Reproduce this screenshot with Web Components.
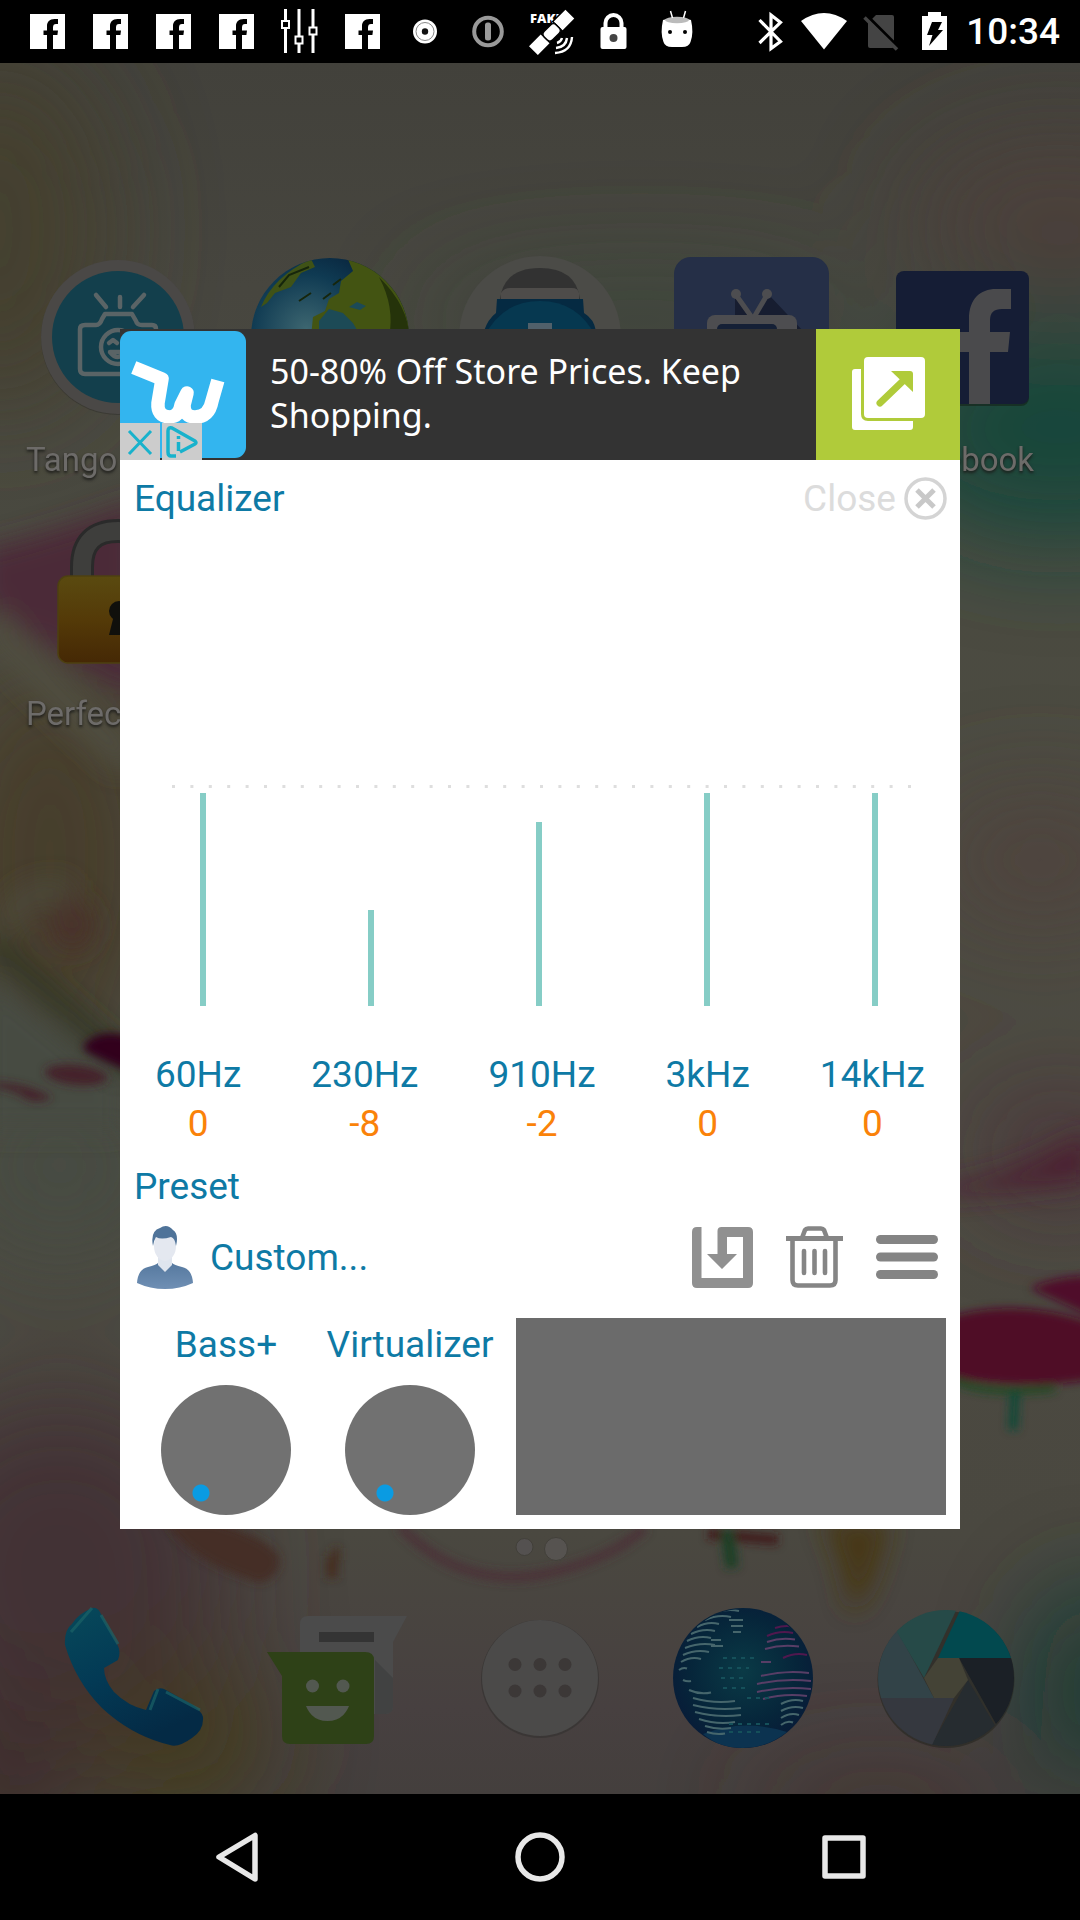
<!DOCTYPE html>
<html lang="en">
<head>
<meta charset="utf-8">
<meta name="viewport" content="width=device-width, initial-scale=1">
<title>Equalizer</title>
<style>
html, body { margin: 0; background: #000; }
body { min-height: 100vh; font-family: Roboto, "Noto Sans", sans-serif; }
phone-screen { min-height: 100vh; }
</style>
</head>
<body>
<phone-screen>
  <status-bar slot="status"></status-bar>
  <wall-paper></wall-paper>
  <home-launcher></home-launcher>
  <eq-dialog></eq-dialog>
  <nav-bar slot="nav"></nav-bar>
</phone-screen>

<script>
const define = (name, html, setup) => {
  const tpl = document.createElement('template');
  tpl.innerHTML = html;
  customElements.define(name, class extends HTMLElement {
    constructor() {
      super();
      this.attachShadow({ mode: 'open' }).appendChild(tpl.content.cloneNode(true));
    }
    connectedCallback() { if (setup) setup(this, this.shadowRoot); }
  });
};

/* ---------- Frame ---------- */
define('phone-screen', `
<style>
:host { display: flex; flex-direction: column; }
main { flex: 1; position: relative; display: grid; grid-template: 1fr / 1fr; overflow: hidden; }
::slotted(:not([slot])) { grid-area: 1 / 1; }
</style>
<slot name="status"></slot>
<main><slot></slot></main>
<slot name="nav"></slot>`);

/* ---------- Status bar ---------- */
const fb = `<svg viewBox="0 0 63 63"><g transform="translate(14 14)"><path fill="#fff" fill-rule="evenodd" d="M0 0H35V35H23V21H27.4L28 16.5H23V13.500C23 11 24 10 26 10H28V5H24.500C19.500 5 17 8 17 12V16.500H13.500V21H17V35H0Z"/></g></svg>`;
define('status-bar', `
<style>
:host { display: flex; justify-content: space-between; align-items: center; height: 63px; padding: 0 20px 0 16px; background: #000; color: #fff; }
div { display: flex; align-items: center; }
svg { display: block; width: 63px; height: 63px; }
.sys svg { width: 54px; }
time { font-size: 37px; line-height: 65px; font-weight: 500; padding-left: 6px; }
</style>
<div>
${fb}${fb}${fb}${fb}
<svg viewBox="0 0 63 63" stroke="#fff" fill="#000"><path stroke-width="3" d="M17.500 9V53M31 9V53M45 9V53"/><path stroke-width="2" d="M14 21h7v7h-7zM27.500 36.500h7v7h-7zM41.500 27.500h7v7h-7z"/></svg>
${fb}
<svg viewBox="0 0 63 63"><circle cx="31" cy="31.500" r="12" fill="#fff"/><circle cx="31" cy="31.500" r="9" fill="none" stroke="#888"/><circle cx="31" cy="31.500" r="3.200" fill="#111"/></svg>
<svg viewBox="0 0 63 63"><circle cx="31" cy="31.500" r="13.800" fill="none" stroke="#999" stroke-width="4"/><rect x="28" y="22.500" width="6" height="18" rx="2.500" fill="#999"/></svg>
<svg viewBox="0 0 63 63"><text x="10" y="23" font-size="13" font-weight="900" fill="#fff" font-family="Open Sans, sans-serif">FAKE</text>
<g transform="rotate(-45 32 32)" fill="#fff" stroke="#000" stroke-width="1.500"><rect x="40" y="25" width="18" height="14"/><rect x="5" y="25" width="18" height="14"/><rect x="23" y="26" width="17" height="12" rx="4"/></g><path fill="none" stroke="#fff" stroke-width="2.400" d="M37 43q4-1 5-5M36 48q10-1 11-10M35 53q16-1 17-16"/></svg>
<svg viewBox="0 0 63 63"><rect x="17.500" y="27" width="26" height="22" rx="2" fill="#fff"/><path d="M22.500 28V23a8 8 0 0 1 16 0V28" fill="none" stroke="#fff" stroke-width="4"/><circle cx="30.500" cy="38" r="4" fill="#444"/></svg>
<svg viewBox="0 0 63 63"><path d="M17 20Q31 15 45 20Q48 33 44.500 42Q43 47 36 47H26Q19 47 17.500 42Q14 33 17 20Z" fill="#fff"/><ellipse cx="31" cy="20" rx="12" ry="3.300" fill="#bbb"/><path d="M24.500 11l2 7M39.500 11l-2 7" stroke="#fff" stroke-width="1.500"/><circle cx="24" cy="32" r="2" fill="#000"/><circle cx="39" cy="32" r="2" fill="#000"/></svg>
</div>
<div class="sys">
<svg viewBox="0 0 54 63"><path d="M15.500 20L36.500 41.500L27 48.500V15L36.500 22.500L15.500 43" fill="none" stroke="#fff" stroke-width="3.200"/></svg>
<svg viewBox="0 0 54 63"><path d="M3 21Q26 5 49 21L26 49.500Z" fill="#fff"/></svg>
<svg viewBox="0 0 54 63"><path d="M24 15H40a2 2 0 0 1 2 2V46a2 2 0 0 1-2 2H18a2 2 0 0 1-2-2V23Z" fill="#444"/><path d="M14 15L47 48" stroke="#000" stroke-width="3.500"/><path d="M12.500 17.500L45 49.500" stroke="#444" stroke-width="3.500"/></svg>
<svg viewBox="0 0 54 63"><path d="M22 12h13v4h6v34H16V16h6z" fill="#fff"/><path d="M26 22h10l-4 8h5L23 46l3.500-11H21z" fill="#000"/></svg>
<time>10:34</time>
</div>`);

/* ---------- Wallpaper ---------- */
define('wall-paper', `
<style>
:host { position: absolute; inset: 0; background: #4a463e; }
svg { display: block; width: 100%; height: 100%; }
</style>
<svg viewBox="0 63 1080 1731" preserveAspectRatio="none" aria-hidden="true">
<defs>
<linearGradient id="b" x1="0" y1="0" x2="0" y2="1"><stop offset="0" stop-color="#42413b"/><stop offset=".13" stop-color="#47463f"/><stop offset=".3" stop-color="#4b4b41"/><stop offset=".6" stop-color="#4c4a41"/><stop offset=".85" stop-color="#4a4840"/><stop offset=".95" stop-color="#474040"/><stop offset="1" stop-color="#443f3d"/></linearGradient>
<filter id="f4" filterUnits="userSpaceOnUse" x="-200" y="-100" width="1500" height="2200"><feGaussianBlur stdDeviation="4"/></filter>
<filter id="f12" filterUnits="userSpaceOnUse" x="-200" y="-100" width="1500" height="2200"><feGaussianBlur stdDeviation="13"/></filter>
<filter id="f40" filterUnits="userSpaceOnUse" x="-300" y="-200" width="1700" height="2400"><feGaussianBlur stdDeviation="55"/></filter>
</defs>
<rect y="63" width="1080" height="1731" fill="url(#b)"/>
<g filter="url(#f40)">
<ellipse cx="0" cy="230" rx="110" ry="180" fill="#443f2e"/>
<ellipse cx="1060" cy="220" rx="150" ry="80" fill="#4b413a"/>
<ellipse cx="1060" cy="430" rx="180" ry="110" fill="#13463a"/>
<ellipse cx="640" cy="320" rx="220" ry="40" fill="#3b463a"/>
<ellipse cx="50" cy="860" rx="110" ry="200" fill="#473c2b"/>
<ellipse cx="1040" cy="860" rx="110" ry="60" fill="#50423d"/>
<ellipse cx="60" cy="1170" rx="120" ry="100" fill="#474b43"/>
<ellipse cx="60" cy="1570" rx="170" ry="180" fill="#433334"/>
<ellipse cx="180" cy="1740" rx="90" ry="70" fill="#433b18"/>
<ellipse cx="1100" cy="1690" rx="60" ry="100" fill="#0f3e30"/>
<ellipse cx="880" cy="1810" rx="130" ry="30" fill="#45312f"/>
<ellipse cx="0" cy="1790" rx="60" ry="120" fill="#3c2b2a"/>
<ellipse cx="1060" cy="1150" rx="80" ry="50" fill="#4b303a"/>
</g>
<g filter="url(#f12)">
<path d="M-20 550Q60 530 140 500V700Q60 660 -20 600Z" fill="#4b2a38"/>
<path d="M-10 620Q50 690 130 760" stroke="#504d3f" stroke-width="34" fill="none"/>
<path d="M10 930Q10 885 70 890" stroke="#4d4c3d" stroke-width="16" fill="none"/>
<ellipse cx="72" cy="925" rx="22" ry="26" fill="#4a302c"/>
<path d="M-10 940L140 1075" stroke="#2d3623" stroke-width="18"/>
<path d="M-20 965L125 1085V1130H-20Z" fill="#464b42"/>
<path d="M820 1520H890Q870 1610 850 1610Q840 1550 820 1520Z" fill="#473717"/>
<path d="M940 1185Q1010 1180 1090 1130V1180Q1020 1190 940 1196Z" fill="#4c2130"/>
</g>
<g filter="url(#f4)">
<path d="M165 1522H215Q290 1545 278 1568Q268 1590 245 1578Q190 1560 165 1522Z" fill="#452e27"/>
<path d="M84 1045Q100 1025 140 1040V1075Q100 1060 84 1050Z" fill="#33051f"/>
<ellipse cx="76" cy="1075" rx="31" ry="10" transform="rotate(6 76 1075)" fill="#45242b"/>
<path d="M-5 1082Q30 1084 52 1098Q30 1106 20 1094Q5 1088 -5 1088Z" fill="#452329"/>
<path d="M940 1320Q1010 1295 1090 1322V1380Q1010 1392 940 1374Z" fill="#4f0a28"/>
<path d="M1030 1288Q1060 1275 1090 1276V1316Q1060 1302 1030 1288Z" fill="#500d2a"/>
<path d="M955 1380Q985 1396 1055 1388" stroke="#1c4a22" stroke-width="7" fill="none"/>
<path d="M1015 1392L1013 1430" stroke="#174a37" stroke-width="10"/>
<path d="M400 1526Q460 1590 545 1574Q610 1560 645 1528" stroke="#4c3337" stroke-width="9" fill="none"/>
<path d="M332 1554H340M332 1556V1578" stroke="#452d22" stroke-width="12" fill="none"/>
<path d="M708 1534L778 1540" stroke="#401c1e" stroke-width="10"/>
<path d="M727 1530L732 1568" stroke="#1c4026" stroke-width="13"/>
</g>
</svg>`);

/* ---------- Launcher ---------- */
define('launcher-app', `
<style>
:host { display: flex; flex-direction: column; align-items: center; min-width: 0; height: 254px; color: #6d6b69; }
div { width: 160px; height: 160px; }
span { display: block; height: 86px; line-height: 86px; font-size: 33px; white-space: nowrap; text-shadow: 0 2px 3px #1c1c1a; }
:host([start]) span { align-self: flex-start; padding-left: 14px; }
::slotted(svg) { display: block; width: 160px; height: 160px; overflow: visible; }
</style>
<div><slot></slot></div><span></span>`, (host, root) => {
  root.querySelector('span').textContent = host.getAttribute('name') || '';
});

const apps = `
<launcher-app name="Tango" start><svg viewBox="0 0 160 160"><circle cx="80" cy="81" r="77" fill="#2e2e2a" opacity=".5"/><circle cx="80" cy="80" r="77" fill="#4a4846"/><circle cx="80" cy="80" r="66" fill="#133f4c"/><g fill="none" stroke="#5a6466" stroke-width="4.500" stroke-linecap="round" stroke-linejoin="round"><path d="M58 38L68 50M82 40V50M106 38L95 50M42 72Q42 68 47 68H58Q62 68 64 62L67 57H94L98 64Q99 68 104 68H114Q118 68 118 72V112Q118 117 113 117H47Q42 117 42 112Z"/><circle cx="80" cy="90" r="17"/><path d="M71 86l4-3 4 3M72 95q8 10 15 0z"/></g></svg></launcher-app>
<launcher-app><svg viewBox="0 0 160 160"><defs><radialGradient id="e" cx=".35" cy=".45" r=".7"><stop offset="0" stop-color="#3d6670"/><stop offset=".5" stop-color="#0f3a52"/><stop offset="1" stop-color="#04152e"/></radialGradient><clipPath id="ec"><circle cx="81" cy="80" r="79"/></clipPath></defs><circle cx="81" cy="80" r="79" fill="url(#e)"/><g clip-path="url(#ec)"><path d="M98 0L104 14 92 24 90 36 80 42 76 54 64 60 62 80H160V0Z" fill="#435412"/><path d="M12 50Q24 20 62 2L66 10 52 16 42 30 26 36 18 46Z" fill="#3f5216"/><path d="M70 64l10-12 14 4 10 10 8 14H70zM100 50l8-5 9 4-6 4z" fill="#1c4a56"/><path d="M30 30l10-12 20-8M84 28l8-6M74 42l8-6M50 44l12-8" stroke="#16260c" stroke-width="2" fill="none"/><path d="M130 20Q160 50 160 80H140Q146 50 130 20Z" fill="#25330a"/></g></svg></launcher-app>
<launcher-app><svg viewBox="0 0 160 160"><circle cx="80" cy="80" r="81" fill="#4b4b47"/><path d="M40 42Q44 11 80 11T120 42Z" fill="#323232"/><path d="M41 36Q44 31 50 31H112Q118 31 119 36V42H41Z" fill="#4e4c4a"/><path d="M37 42H123L124 56Q134 62 136 74H24Q28 62 36 56Z" fill="#052a42"/><path d="M24 80Q42 44 80 44T136 80Z" fill="#063850"/><rect x="68" y="66" width="24" height="6" fill="#50606a"/></svg></launcher-app>
<launcher-app><svg viewBox="0 0 160 160"><rect x="3" y="0" width="155" height="155" rx="17" fill="#252f47"/><path d="M64 38L84 60 98 38 132 74H64Z" fill="#171d30"/><path d="M65 38L82 62 96 38" fill="none" stroke="#4d4d50" stroke-width="5"/><circle cx="65" cy="37" r="5" fill="#4d4d50"/><circle cx="96" cy="37" r="5" fill="#4d4d50"/><rect x="36" y="58" width="90" height="70" rx="8" fill="#4d4d50"/><rect x="46" y="67" width="60" height="50" rx="5" fill="#152036"/></svg></launcher-app>
<launcher-app name="Facebook"><svg viewBox="0 0 160 160"><rect x="14" y="16" width="133" height="133" rx="8" fill="#111a10" opacity=".5"/><rect x="14" y="14" width="133" height="133" rx="8" fill="#151d35"/><path d="M87 147V95H72V75H87V62C87 42 98 32 114 32H129V52H120Q108 52 108 63V75H128L126 95H108V147Z" fill="#4a4a4c"/></svg></launcher-app>
<launcher-app name="Perfect" start><svg viewBox="0 0 160 160"><defs><linearGradient id="p" x1="0" y1="0" x2="0" y2="1"><stop offset="0" stop-color="#5a4a10"/><stop offset=".5" stop-color="#543a08"/><stop offset="1" stop-color="#452805"/></linearGradient></defs><path d="M44 70V56Q44 20 80 20T116 56V70" fill="none" stroke="#2a2a2a" stroke-width="24"/><path d="M44 70V56Q44 20 80 20T116 56V70" fill="none" stroke="#3e3e3c" stroke-width="18"/><rect x="20" y="65" width="120" height="87" rx="10" fill="url(#p)" stroke="#4d4010" stroke-width="1.500"/><circle cx="81" cy="100" r="10" fill="#10100c"/><path d="M76 104h10l5 20H71z" fill="#10100c"/></svg></launcher-app>`;

const lines = (rows, c) => rows.map(([x, y, w, d]) => `<path d="M${x} ${y}q${w / 2} ${d} ${w} ${d / 2}" stroke="${c}"/>`).join('');
define('home-launcher', `
<style>
:host { display: flex; flex-direction: column; justify-content: space-between; z-index: 1; }
.apps { display: grid; grid-template-columns: repeat(5, 1fr); padding: 194px 12px 0; }
footer { display: flex; flex-direction: column; align-items: center; gap: 37px; padding: 0 32px 36px; }
.dots { width: 60px; height: 26px; }
.dock { display: grid; grid-template-columns: repeat(5, 1fr); justify-items: center; align-self: stretch; }
.dock svg { display: block; width: 160px; height: 160px; overflow: visible; }
</style>
<div class="apps">${apps}</div>
<footer>
<svg class="dots" viewBox="0 0 60 26"><circle cx="14.500" cy="12" r="8.500" fill="#545150" stroke="#42403a"/><circle cx="46" cy="14" r="11.500" fill="#565350" stroke="#42403a"/></svg>
<div class="dock">
<svg viewBox="0 0 160 160"><defs><linearGradient id="t" x1="0" y1="0" x2=".5" y2="1"><stop offset="0" stop-color="#07495a"/><stop offset=".5" stop-color="#033a55"/><stop offset="1" stop-color="#042a45"/></linearGradient></defs><path d="M38 10Q24 16 18 26Q10 32 11 47Q22 84 48 110Q78 138 116 147Q124 150 138 140Q150 132 149 119Q147 112 137 106L112 92Q106 88 100 93L92 112Q74 108 60 94Q50 82 50 70L64 62Q67 54 64 48L48 18Q44 8 38 10Z" fill="url(#t)"/><path d="M38 10L17 34M47 17L64 46M104 91L96 112M112 94L146 112" stroke="#1b6367" stroke-width="3" opacity=".7" fill="none"/></svg>
<svg viewBox="0 0 160 160"><path d="M43 26Q43 18 51 18H150L136 44V108Q136 116 128 116H43Z" fill="#4b4b4b"/><path d="M118 62L136 80V108Q136 116 128 116H118Z" fill="#414242"/><rect x="62" y="34" width="55" height="10" fill="#343434"/><path d="M10 54H108Q117 54 117 62V138Q117 146 109 146H33Q25 146 25 138V78Z" fill="#2e4117"/><circle cx="55.500" cy="88" r="6.500" fill="#525850"/><circle cx="86" cy="88" r="6.500" fill="#525850"/><path d="M49 108H92Q86 123 70.500 123T49 108Z" fill="#525850"/></svg>
<svg viewBox="0 0 160 160"><circle cx="80" cy="81" r="59" fill="#32302e" opacity=".6"/><circle cx="80" cy="80" r="58" fill="#4b4a49"/><g fill="#3c3837"><circle cx="55" cy="66.500" r="6.500"/><circle cx="80" cy="66.500" r="6.500"/><circle cx="105" cy="66.500" r="6.500"/><circle cx="55" cy="93" r="6.500"/><circle cx="80" cy="93" r="6.500"/><circle cx="105" cy="93" r="6.500"/></g></svg>
<svg viewBox="0 0 160 160"><defs><radialGradient id="g" cx=".5" cy=".45" r=".55"><stop offset="0" stop-color="#0a3a46"/><stop offset=".7" stop-color="#06253a"/><stop offset="1" stop-color="#081c38"/></radialGradient><clipPath id="gc"><circle cx="80" cy="80" r="69"/></clipPath></defs><circle cx="80" cy="80" r="70" fill="url(#g)"/><path d="M40 136Q80 120 124 134Q104 150 80 150T40 136Z" fill="#0c3350"/><g fill="none" stroke-width="2" clip-path="url(#gc)">
${lines([[50,16,26,-6],[42,22,26,-6],[34,29,22,-6],[28,36,24,-6],[24,43,24,-6],[22,50,30,-6],[20,57,26,-6],[18,64,20,-6],[48,42,10,0],[48,48,12,0],[66,22,14,0],[68,28,12,0],[70,34,8,0],[16,72,8,-3],[20,82,8,2],[26,92,22,5],[30,100,42,6],[30,107,48,6],[32,114,46,6],[36,121,36,6],[42,128,26,4],[44,134,18,3],[118,106,22,-6],[118,113,22,-6],[118,120,18,-6],[118,127,12,-5]], '#46666c')}
${lines([[104,44,28,-5],[102,51,34,-5],[98,64,10,0],[98,78,48,-6],[94,86,54,-6],[94,94,54,-6],[100,101,44,-6]], '#583e66')}
${lines([[104,38,26,-6],[112,30,18,-3],[120,60,24,-6]], '#50184e')}
<path d="M60 60h34M56 70h30M58 80h26M60 90h24M84 100h22M66 126h40M66 134h34" stroke="#15505a" stroke-dasharray="4 5"/></g></svg>
<svg viewBox="0 0 160 160"><defs><clipPath id="cc"><circle cx="80" cy="80" r="68"/></clipPath></defs><circle cx="80" cy="81.500" r="68.500" fill="#2a2924" opacity=".7"/><g clip-path="url(#cc)"><path d="M10 100V0L32 34L68 100Z" fill="#324348"/><path d="M31 34V0H96L58 80Z" fill="#264a48"/><path d="M96 8H160V60H72Z" fill="#02494f"/><path d="M93 60H160V160L130 126Z" fill="#1b2026"/><path d="M102 82L134 136 120 160H50L66 146Z" fill="#262c30"/><path d="M0 100H88L60 160H0Z" fill="#35383f"/></g><path d="M72 60H93L102 82L88 100H68L58 80Z" fill="#444336"/></svg>
</div>
</footer>`);

/* ---------- Ad ---------- */
define('ad-banner', `
<style>
:host { display: flex; height: 131px; background: #333; color: #fff; position: relative; }
a { color: inherit; text-decoration: none; }
.copy { flex: 1; display: flex; gap: 24px; font-family: "Noto Sans", "Open Sans", sans-serif; font-size: 34px; line-height: 44px; }
.copy svg { flex: none; width: 126px; height: 127px; margin-top: 2px; }
.copy span { padding: 20px 40px 0 0; }
.go { width: 144px; background: #b0cb3a; display: grid; place-items: center; }
.tools { position: absolute; left: 0; bottom: 0; display: flex; gap: 2px; }
button { border: 0; padding: 0; background: #ccc; width: 40px; height: 37px; }
svg { display: block; }
</style>
<a class="copy" href="#store"><svg viewBox="0 0 126 127" aria-hidden="true"><rect width="126" height="127" rx="11" fill="#33b5ef"/><path d="M20 39L42 48L38 72Q37 85 49 86Q59 86 61 74L67 62L64 74Q64 86 75 86Q89 86 92 70L96 56" fill="none" stroke="#fff" stroke-width="13.500" stroke-linecap="square" stroke-linejoin="round"/></svg><span>50-80% Off Store Prices. Keep Shopping.</span></a>
<a class="go" href="#open" aria-label="Open"><svg width="76" height="74" viewBox="-2 0 76 74"><path d="M3 12H9V57Q9 64 16 64H61V70Q61 73 58 73H3Q0 73 0 70V15Q0 12 3 12Z" fill="#fff"/><rect x="12" y="0" width="61" height="61" rx="4" fill="#fff"/><path d="M28 46L52 23" stroke="#b0cb3a" stroke-width="7" stroke-linecap="round"/><path d="M39 14H58Q61 14 61 17V35Z" fill="#b0cb3a"/></svg></a>
<div class="tools">
<button aria-label="Close ad"><svg width="40" height="37" viewBox="0 0 40 37"><path d="M9 8L31 31M31 8L9 31" stroke="#18b2cc" stroke-width="3"/></svg></button>
<button aria-label="Ad choices"><svg width="40" height="37" viewBox="0 0 40 37" fill="none" stroke="#18b2cc" stroke-width="3.500" stroke-linejoin="round"><path d="M14 33H9Q6 33 6 29V8Q6 4 10 5L33 18Q35 20 33 21L18 29"/><path d="M16.500 19V28M16.500 13V16"/></svg></button>
</div>`);

/* ---------- Equalizer chart ---------- */
const bands = [['60Hz', 0], ['230Hz', -8], ['910Hz', -2], ['3kHz', 0], ['14kHz', 0]];
define('eq-chart', `
<style>
:host { display: block; font-size: 37px; line-height: 49px; }
.plot { display: grid; grid-template-columns: repeat(5, 1fr); padding: 42px 0 44px; position: relative; }
.zero { position: absolute; left: 52px; top: 247px; width: calc(100% - 101px); height: 3px; }
.cell { display: flex; justify-content: center; padding-right: 2px; }
input { appearance: none; -webkit-appearance: none; writing-mode: vertical-lr; direction: rtl; width: 6px; height: 426px; margin: 0; background: linear-gradient(to top, #86cdc6 var(--level), transparent var(--level)); }
input::-webkit-slider-thumb { -webkit-appearance: none; width: 5px; height: 5px; background: transparent; }
.names { display: flex; justify-content: space-around; }
.names div { display: flex; flex-direction: column; align-items: center; }
label { color: #0e7aa5; }
output { color: #fa8209; }
</style>
<div class="plot">
<svg class="zero"><line x1="0" y1="1.500" x2="100%" y2="1.500" stroke="#dedede" stroke-width="3" stroke-dasharray="3 15.400"/></svg>
${bands.map(([n, v], i) => `<div class="cell"><input type="range" id="b${i}" min="-15" max="15" value="${v}"></div>`).join('')}
</div>
<div class="names">${bands.map(([n, v], i) => `<div><label for="b${i}">${n}</label><output for="b${i}">${v}</output></div>`).join('')}</div>`,
(host, root) => {
  root.querySelectorAll('input').forEach((el, i) => {
    const out = root.querySelectorAll('output')[i];
    const draw = () => { el.style.setProperty('--level', 50 + el.value * 3.43 + '%'); out.textContent = el.value; };
    el.addEventListener('input', draw);
    draw();
  });
});

/* ---------- Rotary knob ---------- */
define('eq-knob', `
<style>
:host { display: flex; flex-direction: column; align-items: center; gap: 14px; color: #0e7aa5; font-size: 37px; line-height: 53px; }
label { white-space: nowrap; }
input { appearance: none; -webkit-appearance: none; width: 130px; height: 130px; margin: 0; border-radius: 50%; background: radial-gradient(circle at 40px 108px, #0a9be2 8px, transparent 9px), #717171; }
input::-webkit-slider-thumb { -webkit-appearance: none; width: 18px; height: 18px; background: transparent; }
</style>
<label for="k"><slot></slot></label><input id="k" type="range" value="0">`);

/* ---------- Dialog ---------- */
define('eq-dialog', `
<style>
:host { display: grid; place-items: center; padding: 0 120px; z-index: 2; color: #0e7aa5; font-size: 37px; line-height: 49px; }
section { width: 100%; background: #fff; padding-bottom: 14px; }
header { display: flex; justify-content: space-between; align-items: center; padding: 12px 13px 12px 14px; }
h1, h2 { margin: 0; font: inherit; }
h1 { line-height: 54px; }
h2 { padding: 14px 14px 0; }
button { border: 0; padding: 0; background: none; font: inherit; color: inherit; display: flex; align-items: center; }
svg { display: block; }
.close { color: #dcdcdc; gap: 8px; }
.preset { display: flex; justify-content: space-between; align-items: center; height: 93px; padding: 0 22px 0 16px; }
.preset button { gap: 16px; }
.actions { display: flex; align-items: center; gap: 33px; }
.bottom { display: flex; gap: 14px; padding: 14px 14px 0; }
.knobs { flex: 1; display: grid; grid-template-columns: 1fr 1fr; }
.scope { width: 430px; background: #6b6b6b; }
</style>
<section role="dialog" aria-labelledby="title">
<ad-banner></ad-banner>
<header><h1 id="title">Equalizer</h1>
<button class="close">Close<svg width="43" height="43" viewBox="0 0 43 43" fill="none"><circle cx="21.500" cy="21.500" r="19.500" stroke="#d4d4d4" stroke-width="3.500"/><path d="M13 13L30 30M30 13L13 30" stroke="#c8c8c8" stroke-width="5"/></svg></button></header>
<eq-chart></eq-chart>
<h2>Preset</h2>
<div class="preset">
<button><svg width="58" height="64" viewBox="0 0 58 64"><defs><linearGradient id="u" x1="0" y1="0" x2="0" y2="1"><stop offset="0" stop-color="#56799f"/><stop offset="1" stop-color="#6f8fb4"/></linearGradient></defs><path d="M1 58Q2 44 12 42Q20 40 22 38H36Q38 40 46 42Q56 44 57 58Q44 64 29 64T1 58Z" fill="url(#u)"/><path d="M22 30H36V40L29 47L22 40Z" fill="#dfe5ee"/><ellipse cx="29" cy="21" rx="11" ry="15" fill="#e4e8f0"/><path d="M17 21Q14 6 24 3Q31-2 37 5Q43 9 40 21Q39 13 35 12Q25 15 20 12Q18 15 17 21Z" fill="#4f7399"/></svg>Custom...</button>
<div class="actions">
<button aria-label="Save preset"><svg width="61" height="61" viewBox="0 0 61 61"><path d="M5 0H9.500V51H51V10H35V27H45L30 42L15 27H25.500V4Q25.500 0 29.500 0H56Q61 0 61 5V56Q61 61 56 61H5Q0 61 0 56V5Q0 0 5 0Z" fill="#909090"/></svg></button>
<button aria-label="Delete preset"><svg width="57" height="62" viewBox="0 0 57 62" fill="none" stroke="#858585"><path d="M0 12.500H57" stroke-width="5"/><path d="M16 12L19 4Q20 2.500 22 2.500H35Q37 2.500 38 4L41 12M6.500 14V54Q6.500 59.500 12 59.500H44Q49.500 59.500 49.500 54V14" stroke-width="4.600"/><path d="M18 25V47M28.500 25V47M39 25V47" stroke-width="4.600" stroke-linecap="round"/></svg></button>
<button aria-label="Preset list"><svg width="62" height="46" viewBox="0 0 62 46" fill="#848484"><rect width="62" height="9" y="1" rx="4.500"/><rect width="62" height="9" y="18.500" rx="4.500"/><rect width="62" height="9" y="36" rx="4.500"/></svg></button>
</div></div>
<div class="bottom"><div class="knobs"><eq-knob>Bass+</eq-knob><eq-knob>Virtualizer</eq-knob></div><div class="scope"></div></div>
</section>`);

/* ---------- Navigation bar ---------- */
define('nav-bar', `
<style>
:host { display: flex; justify-content: center; height: 126px; background: #000; }
button { width: 304px; border: 0; padding: 0; background: none; display: grid; place-items: center; }
svg { display: block; width: 56px; height: 56px; fill: none; stroke: #e8e8e8; stroke-width: 5.500; stroke-linejoin: round; }
</style>
<button aria-label="Back"><svg viewBox="0 0 56 56"><path d="M11 28L47 6.500V50Z"/></svg></button>
<button aria-label="Home"><svg viewBox="0 0 56 56"><circle cx="28" cy="28" r="22"/></svg></button>
<button aria-label="Recent apps"><svg viewBox="0 0 56 56"><rect x="9" y="9" width="38" height="38"/></svg></button>`);
</script>
</body>
</html>
